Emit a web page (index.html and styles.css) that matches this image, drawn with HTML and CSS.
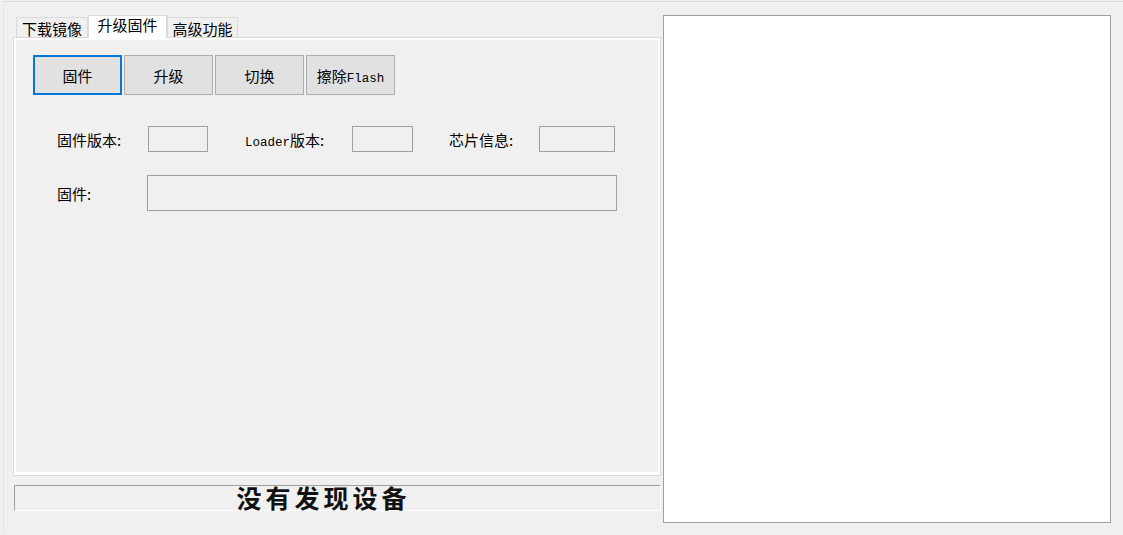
FILE: index.html
```html
<!DOCTYPE html>
<html lang="zh-CN">
<head>
    <meta charset="UTF-8">
    <meta name="viewport" content="width=device-width, initial-scale=1.0">
    <title>升级固件</title>
    <link rel="stylesheet" href="styles.css">
</head>
<body>
    <div class="window">
        <div class="left">
            <div class="tabs">
                <div class="tab tab-1">下载镜像</div>
                <div class="tab tab-2 active">升级固件</div>
                <div class="tab tab-3">高级功能</div>
            </div>

            <div class="tab-panel">
                <div class="tab-page">
                    <div class="toolbar">
                        <button class="btn focused">固件</button>
                        <button class="btn">升级</button>
                        <button class="btn">切换</button>
                        <button class="btn">擦除<span class="latin">Flash</span></button>
                    </div>

                    <div class="form-row row-info">
                        <span class="lbl lbl-fw">固件版本:</span>
                        <div class="field field-fw"></div>
                        <span class="lbl lbl-loader"><span class="latin">Loader</span>版本:</span>
                        <div class="field field-loader"></div>
                        <span class="lbl lbl-chip">芯片信息:</span>
                        <div class="field field-chip"></div>
                    </div>

                    <div class="form-row row-file">
                        <span class="lbl lbl-file">固件:</span>
                        <div class="field field-file"></div>
                    </div>
                </div>
            </div>

            <div class="status">没有发现设备</div>
        </div>

        <div class="log"></div>
    </div>
</body>
</html>
```

FILE: styles.css
```css
body {
    margin: 0;
    background: #f0f0f0;
    font-family: "Noto Sans CJK SC", "Microsoft YaHei", sans-serif;
    font-size: 15px;
    color: #000;
    overflow: hidden;
}

.window {
    display: flex;
    height: 533px;
    margin-top: 1px;
    margin-left: 3px;
    border-top: 1px solid #dadada;
    border-left: 1px solid #e4e4e4;
    box-sizing: border-box;
}

.latin {
    font-family: "Liberation Mono", monospace;
    font-size: 12.5px;
}

/* left column */
.left {
    display: flex;
    flex-direction: column;
    width: 648px;
    margin-left: 9px;
    padding-top: 13px;
}

.tabs {
    display: flex;
    align-items: flex-end;
    height: 23px;
    margin-bottom: -1px;
    padding-left: 3px;
    position: relative;
    z-index: 1;
}

.tab {
    height: 20px;
    margin-bottom: 1px;
    border: 1px solid #dadada;
    border-bottom: none;
    background: #f0f0f0;
    text-align: center;
    line-height: 21px;
    box-sizing: border-box;
}

.tab-1 { width: 72px; }
.tab-2 { width: 79px; }
.tab-3 { width: 71px; }

.tab.active {
    height: 23px;
    margin-bottom: 0;
    background: #fff;
    line-height: 18px;
}

.tab-panel {
    height: 439px;
    padding: 2px 2px 3px 2px;
    border: 1px solid #d9d9d9;
    background: #fff;
    box-sizing: border-box;
    display: flex;
}

.tab-page {
    flex: 1;
    background: #f0f0f0;
    padding: 15px 0 0 17px;
}

.toolbar {
    display: flex;
    gap: 2px;
}

.btn {
    width: 89px;
    height: 40px;
    padding: 0;
    border: 1px solid #adadad;
    background: #e1e1e1;
    font-family: inherit;
    font-size: 15px;
    color: #000;
}

.btn.focused {
    border: 2px solid #0078d7;
}

.form-row {
    display: flex;
    align-items: center;
    padding-left: 24px;
}

.row-info {
    margin-top: 31px;
}

.row-file {
    margin-top: 23px;
}

.lbl {
    white-space: nowrap;
}

.lbl-fw { width: 91px; }
.lbl-loader { width: 107px; margin-left: 37px; }
.lbl-chip { width: 90px; margin-left: 36px; }
.lbl-file { width: 90px; }

.field {
    height: 26px;
    border: 1px solid #a0a0a0;
    background: #f0f0f0;
    box-sizing: border-box;
}

.field-fw { width: 60px; }
.field-loader { width: 61px; }
.field-chip { width: 76px; }
.field-file { width: 470px; height: 36px; }

.status {
    height: 26px;
    margin-top: 9px;
    margin-left: 1px;
    border-top: 1px solid #a0a0a0;
    border-left: 1px solid #a0a0a0;
    border-bottom: 1px solid #fff;
    border-right: 1px solid #fff;
    box-sizing: border-box;
    padding-right: 28px;
    text-align: center;
    font-size: 25px;
    font-weight: 700;
    line-height: 23px;
    letter-spacing: 4px;
    white-space: nowrap;
    color: #111;
}

/* right column */
.log {
    width: 448px;
    height: 508px;
    margin-top: 13px;
    margin-left: 2px;
    border: 1px solid #a0a0a0;
    background: #fff;
    box-sizing: border-box;
}
```
